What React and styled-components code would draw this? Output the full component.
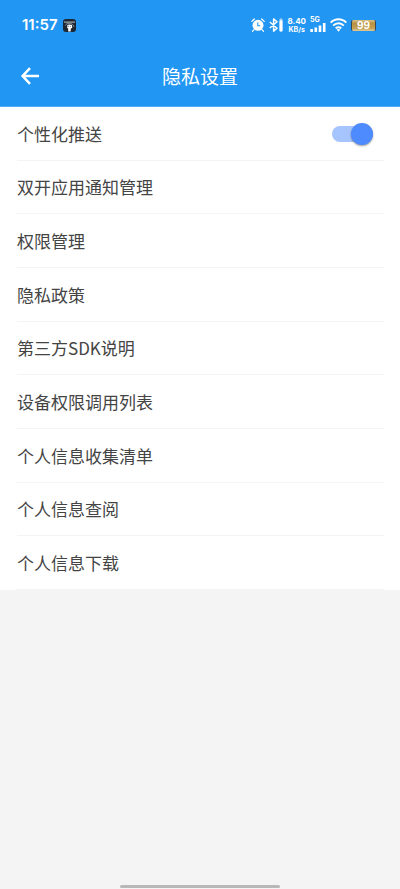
import React, { useState } from "react";
import styled, { createGlobalStyle } from "styled-components";

const LINKS = [
  "双开应用通知管理",
  "权限管理",
  "隐私政策",
  "第三方SDK说明",
  "设备权限调用列表",
  "个人信息收集清单",
  "个人信息查阅",
  "个人信息下载",
];

/*Small app badge next to the clock*/
const AppBadge = () => (
  <svg width="13" height="13" viewBox="0 0 13 13">
    <rect width="13" height="13" rx="3" fill="#1d2733" />
    <path d="M1 3.1h11" stroke="#d5dade" strokeWidth="0.9" />
    <path d="M2.4 6.600C3 5 4.300 4.300 6.200 4.300S10.800 5.400 11 8" stroke="#8d969e" strokeWidth="0.9" fill="none" />
    <path d="M4.400 6l1.800-.6L9 6l.2 3-1.500.6v2.900H5.200V9.600L4.200 9z" fill="#fff" />
    <path d="M5.200 7.300h.9M7.200 7.300h.8" stroke="#1d2733" strokeWidth="0.7" />
  </svg>
);

const AlarmIcon = () => (
  <svg width="14" height="14" viewBox="0 0 14 14">
    <circle cx="7" cy="7.300" r="5.500" fill="#fff" />
    <path d="M.8 3.400L3.300 1M13.200 3.400L10.700 1M2.800 11.800L1.600 13.200M11.200 11.800l1.200 1.400" stroke="#fff" strokeWidth="1.300" strokeLinecap="round" />
    <path d="M6.800 4.400v3.300h2.400" stroke="#2196f3" strokeWidth="1.100" fill="none" />
  </svg>
);

const BluetoothIcon = () => (
  <svg width="14" height="14" viewBox="0 0 14 14">
    <path d="M.8 4l7.200 6.200-3.400 2.900V.9L8 3.800.8 10" stroke="#fff" strokeWidth="1.500" fill="none" strokeLinejoin="round" />
    <rect x="10.500" y="0.500" width="3" height="13" rx="1" fill="#a9d6fb" />
    <rect x="10.500" y="2.500" width="3" height="11" rx="1" fill="#fff" />
  </svg>
);

const SignalIcon = () => (
  <svg width="16" height="9" viewBox="0 0 16 9">
    <path d="M1.600 9V6M5.800 9V4.500M10 9V2.500M14.200 9V0" stroke="#fff" strokeWidth="2.600" />
  </svg>
);

const WifiIcon = () => (
  <svg width="17" height="14" viewBox="0 0 17 14">
    <g stroke="#fff" strokeWidth="1.900" fill="none">
      <path d="M.7 4.700C5 .1 12 .1 16.300 4.700" />
      <path d="M3.200 7.700c3-3.300 7.600-3.300 10.600 0" />
      <path d="M5.700 10.400c1.600-1.600 4-1.600 5.600 0" />
    </g>
    <path d="M6.600 11.600c1.100-.9 2.700-.9 3.800 0l-1.900 2.100z" fill="#fff" />
  </svg>
);

const BackIcon = () => (
  <svg width="20" height="18" viewBox="0 0 20 18">
    <path d="M10 1.200L2.600 9l7.400 7.800M2.400 9H19" stroke="#fff" strokeWidth="2.500" fill="none" />
  </svg>
);

const App = () => {
  const [push, setPush] = useState(true);

  return (
    <>
      <GlobalStyle />
      <Page>
        <Header>
          <StatusBar>
            <Clock>11:57</Clock>
            <AppBadge />
            <StatusIcons>
              <AlarmIcon />
              <BluetoothIcon />
              <Speed>
                <span>8.40</span>
                <small>KB/s</small>
              </Speed>
              <Network>
                <span>5G</span>
                <SignalIcon />
              </Network>
              <WifiIcon />
              <Battery>99</Battery>
            </StatusIcons>
          </StatusBar>
          <TitleBar>
            <BackButton type="button" aria-label="返回">
              <BackIcon />
            </BackButton>
            <Title>隐私设置</Title>
          </TitleBar>
        </Header>

        <List>
          <Row>
            <SwitchLabel>
              个性化推送
              <Switch
                type="checkbox"
                role="switch"
                checked={push}
                onChange={(e) => setPush(e.target.checked)}
              />
            </SwitchLabel>
          </Row>
          {LINKS.map((text) => (
            <Row key={text}>
              <RowLink href="#">{text}</RowLink>
            </Row>
          ))}
        </List>

        <HomeBar />
      </Page>
    </>
  );
};

const GlobalStyle = createGlobalStyle`
  * {
    box-sizing: border-box;
  }

  body {
    margin: 0;
    background: #f4f4f4;
    font-family: "Noto Sans CJK SC", sans-serif;
  }
`;

const Page = styled.div`
  display: flex;
  flex-direction: column;
  min-height: 100vh;
`;

const Header = styled.header`
  background: #2196f3;
  border-bottom: 1px solid #4fabf5;
  color: #fff;
`;

const StatusBar = styled.div`
  display: flex;
  align-items: center;
  height: 50px;
  padding: 0 24px 0 22px;
`;

const Clock = styled.span`
  margin-right: 5px;
  font: 600 15px/20px Inter, sans-serif;
`;

const StatusIcons = styled.div`
  display: flex;
  align-items: center;
  gap: 4px;
  margin-left: auto;
`;

const Speed = styled.div`
  display: flex;
  flex-direction: column;
  align-items: center;
  font: 700 8px/9px Inter, sans-serif;

  small {
    font-size: 7px;
    line-height: 8px;
  }
`;

const Network = styled.div`
  display: flex;
  flex-direction: column;
  padding-bottom: 2px;
  font: 700 7px/7px Inter, sans-serif;
`;

const Battery = styled.div`
  width: 25px;
  border: solid #3c4652;
  border-width: 0 1px;
  border-radius: 2px;
  background: linear-gradient(#d9c28c, #b8913f 30%, #c3a158 75%, #e2cc98);
  font: 700 10px/11px Inter, sans-serif;
  text-align: center;
`;

const TitleBar = styled.div`
  display: grid;
  grid-template-columns: 60px 1fr 60px;
  align-items: center;
  height: 56px;
  padding-bottom: 4px;
`;

const BackButton = styled.button`
  display: flex;
  padding: 12px 20px;
  border: none;
  background: none;
  cursor: pointer;
`;

const Title = styled.h1`
  margin: 0;
  font-size: 19px;
  font-weight: 400;
  line-height: 28px;
  text-align: center;
`;

const List = styled.ul`
  display: grid;
  grid-auto-rows: 1fr;
  min-height: 483px;
  margin: 0;
  padding: 0 16px 0 17px;
  background: #fff;
  list-style: none;
`;

const Row = styled.li`
  display: flex;
  padding-top: 1px;
  border-bottom: 1px solid #f4f4f4;
  color: #444;
  font-size: 17px;
  line-height: 24px;
`;

const SwitchLabel = styled.label`
  display: flex;
  flex: 1;
  align-items: center;
  justify-content: space-between;
  padding-right: 11px;
`;

const RowLink = styled.a`
  display: flex;
  flex: 1;
  align-items: center;
  color: inherit;
  text-decoration: none;
`;

const Switch = styled.input`
  display: flex;
  align-items: center;
  appearance: none;
  width: 41px;
  height: 16px;
  margin: 0;
  border-radius: 8px;
  background: ${({ checked }) => (checked ? "#a6c5ff" : "#ccc")};
  cursor: pointer;

  &::before {
    content: "";
    width: 22px;
    height: 22px;
    margin-left: ${({ checked }) => (checked ? "auto" : "0")};
    border-radius: 50%;
    background: ${({ checked }) => (checked ? "#4e8bff" : "#fafafa")};
    box-shadow: 0 1px 2px rgba(0, 0, 0, 0.4);
  }
`;

const HomeBar = styled.div`
  width: 40%;
  height: 3px;
  margin: auto auto 1px;
  border-radius: 2px;
  background: #b8b8b8;
`;

export default App;
